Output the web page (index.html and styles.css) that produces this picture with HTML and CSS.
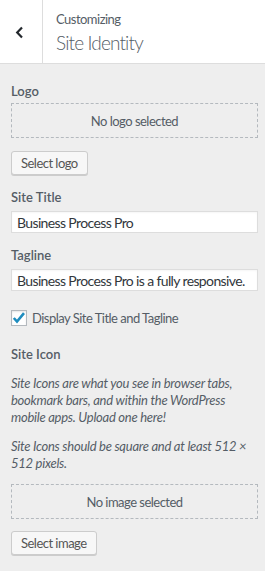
FILE: index.html
```html
<!DOCTYPE html>
<html>
<head>
<meta charset="utf-8">
<link rel="stylesheet" href="styles.css">
</head>
<body>
<div class="panel">
  <header class="head">
    <button class="back" aria-label="Back">
      <svg width="10" height="14" viewBox="0 0 10 14"><path d="M7 1.5 L2.2 6.5 L7 11.5" fill="none" stroke="#23282d" stroke-width="2.2"/></svg>
    </button>
    <div class="titles">
      <span class="sub">Customizing</span>
      <h1 class="title">Site Identity</h1>
    </div>
  </header>
  <main class="body">
    <section class="ctl">
      <div class="label">Logo</div>
      <div class="placeholder">No logo selected</div>
      <button class="btn">Select logo</button>
    </section>
    <section class="ctl">
      <div class="label">Site Title</div>
      <input class="text" type="text" value="Business Process Pro">
    </section>
    <section class="ctl last">
      <div class="label">Tagline</div>
      <input class="text" type="text" value="Business Process Pro is a fully responsive.">
    </section>
    <label class="check">
      <span class="box"><svg width="14" height="12" viewBox="0 0 14 12"><path d="M1.8 6 L5 9.6 L12 1.2" fill="none" stroke="#1e8cbe" stroke-width="2.6"/></svg></span>
      <span>Display Site Title and Tagline</span>
    </label>
    <section class="ctl icon">
      <div class="label">Site Icon</div>
      <p class="desc">Site Icons are what you see in browser tabs, bookmark bars, and within the WordPress mobile apps. Upload one here!</p>
      <p class="desc">Site Icons should be square and at least 512 × 512 pixels.</p>
      <div class="placeholder">No image selected</div>
      <button class="btn">Select image</button>
    </section>
  </main>
</div>
</body>
</html>
```
FILE: styles.css
```css
html, body {
  margin: 0;
  padding: 0;
}
body {
  background: #eeeeee;
  font-family: Lato, "Liberation Sans", sans-serif;
  font-size: 13px;
  letter-spacing: -0.04em;
  color: #555d66;
}
.panel {
  width: 265px;
}
.head {
  display: flex;
  background: #fff;
  border-bottom: 1px solid #ddd;
  height: 63px;
}
.back {
  width: 43px;
  border: none;
  border-right: 1px solid #ddd;
  background: #fff;
  display: flex;
  align-items: center;
  justify-content: center;
  padding: 3px 3px 0 0;
}
.titles {
  display: flex;
  flex-direction: column;
  padding: 11px 0 0 13px;
}
.sub {
  font-size: 13px;
  color: #555d66;
  line-height: 17px;
}
.title {
  margin: 2px 0 0 0;
  font-size: 19px;
  font-weight: 300;
  letter-spacing: -0.045em;
  color: #555d66;
  line-height: 26px;
}
.body {
  padding: 18px 7px 0 11px;
  display: flex;
  flex-direction: column;
}
.ctl {
  display: flex;
  flex-direction: column;
  align-items: flex-start;
  margin-bottom: 13px;
}
.ctl.last {
  margin-bottom: 0;
}
.label {
  font-size: 13px;
  font-weight: 600;
  letter-spacing: 0;
  line-height: 18px;
  margin-bottom: 5px;
}
.ctl:first-child .label {
  margin-bottom: 3px;
}
.placeholder {
  align-self: stretch;
  box-sizing: border-box;
  border: 1px dashed #b4b9be;
  height: 35px;
  display: flex;
  align-items: center;
  justify-content: center;
  color: #555d66;
  margin-bottom: 13px;
}
.btn {
  font-family: inherit;
  font-size: 13px;
  letter-spacing: -0.04em;
  color: #555;
  background: #f7f7f7;
  border: 1px solid #ccc;
  border-radius: 3px;
  box-shadow: 0 1px 0 #ccc;
  height: 24px;
  padding: 0 9px;
  line-height: 22px;
}
.text {
  align-self: stretch;
  box-sizing: border-box;
  height: 22px;
  border: 1px solid #ddd;
  background: #fff;
  font-family: inherit;
  font-size: 14px;
  letter-spacing: -0.045em;
  color: #32373c;
  padding: 0 5px;
  margin: 0;
  box-shadow: inset 0 1px 2px rgba(0,0,0,.04);
}
.check {
  display: flex;
  align-items: center;
  gap: 5px;
  margin: 19px 0 19px 0;
}
.box {
  width: 16px;
  height: 16px;
  box-sizing: border-box;
  border: 1px solid #b4b9be;
  background: #fff;
  display: flex;
  align-items: center;
  justify-content: center;
  box-shadow: inset 0 1px 2px rgba(0,0,0,.1);
}
.icon .label {
  margin-bottom: 12px;
}
.desc {
  margin: 0 0 12px 0;
  font-style: italic;
  letter-spacing: -0.02em;
  line-height: 17px;
}
.icon .placeholder {
  margin-bottom: 12px;
}
```
